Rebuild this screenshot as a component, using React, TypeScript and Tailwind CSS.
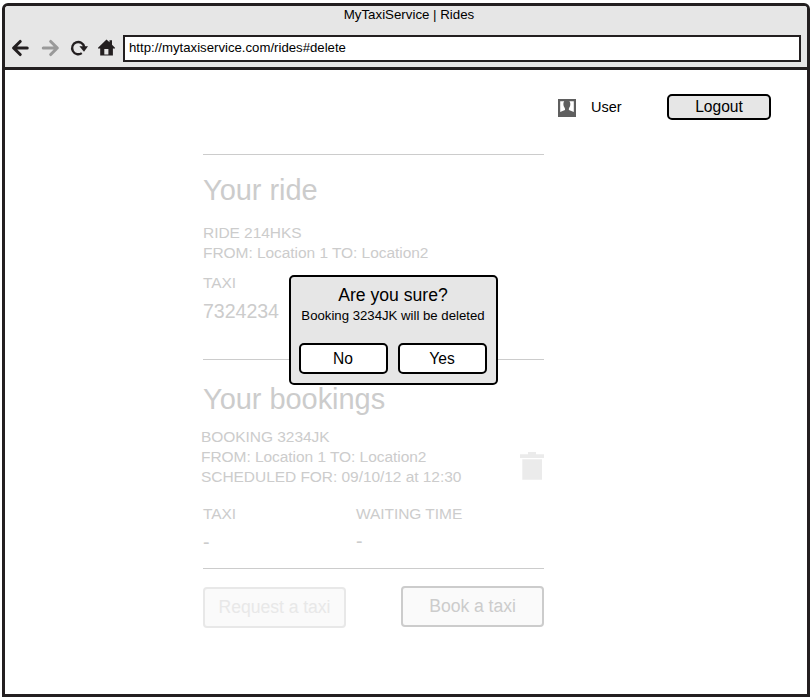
import React from "react";

function BrowserIcons() {
  return (
    <svg className="block h-[24px] w-[112px] shrink-0" viewBox="6 35.5 112 24" fill="none">
      <g stroke="#231f20" strokeWidth="3.1" strokeLinecap="round" strokeLinejoin="round">
        <path d="M14 48.5H27.2M20.2 42L13.6 48.5L20.2 55" />
        <path stroke="#999" d="M43.3 48.5H57M50.7 42L57.3 48.5L50.7 55" />
      </g>
      <path d="M81.8 53.6A6.1 6.1 0 1 1 84.2 47.4" stroke="#231f20" strokeWidth="2.3" />
      <path d="M79.4 46.7H88L84 52.2Z" fill="#231f20" />
      <path
        fillRule="evenodd"
        d="M106.5 40L109.5 42.8V40.8H112V45.2L115 48.2V49H112.9V56H100.2V49H98V48.2ZM104.3 49.6V55H108.4V49.6Z"
        fill="#231f20"
      />
    </svg>
  );
}

function UserIcon() {
  return (
    <svg className="block h-[18px] w-[18px]" viewBox="0 0 18 18">
      <path d="M0 0H18V18H0Z" fill="#5f5f5f" />
      <path
        d="M2.2 2.2H6.2C5 3.8 5.3 6 6 7.8C6.7 9 7.2 9.6 7 10.9L2.2 13ZM15.8 2.2H11.4C12.7 3.8 12.5 6 11.8 7.8C11.1 9 10.7 9.6 10.9 10.9L15.8 13Z"
        fill="#fff"
      />
    </svg>
  );
}

function TrashIcon() {
  return (
    <svg className="block h-[30px] w-[26px]" viewBox="0 0 26 30" fill="#ebebeb">
      <path d="M1 3.2H9V1H17V3.2H25V7H1ZM3.3 8.3H23V28.7H3.3Z" />
    </svg>
  );
}

function Dialog() {
  return (
    <div className="absolute left-[288.5px] top-[275.4px] flex h-[110px] w-[209px] flex-col rounded-[5px] border-[2.4px] border-black bg-[#e6e6e6] pt-[8px] text-center text-black">
      <h2 className="text-[17.6px] leading-5">Are you sure?</h2>
      <p className="whitespace-nowrap pt-px text-[13.2px] leading-5">Booking 3234JK will be deleted</p>
      <div className="mt-[17px] flex justify-between pl-[8px] pr-[9px]">
        <button className="h-[31px] w-[89px] rounded-[5px] border-2 border-black bg-white text-[15.6px] leading-[26px]">No</button>
        <button className="h-[31px] w-[89px] rounded-[5px] border-2 border-black bg-white text-[15.6px] leading-[26px]">Yes</button>
      </div>
    </div>
  );
}

export default function App() {
  return (
    <div className="relative h-[698px] w-[811px] overflow-hidden bg-white pl-[2px] pt-[3px] font-['Liberation_Sans',Arial,sans-serif] text-black">
      <div className="flex h-[694px] w-[808px] flex-col rounded-t-[6px] border-[3px] border-[#231f20]">
        <header className="h-[64px] shrink-0 rounded-t-[3px] border-b-[3px] border-[#231f20] bg-[#e6e6e6]">
          <div className="pl-[6px] text-center text-[13.3px] leading-[18px]">MyTaxiService | Rides</div>
          <div className="mt-[11px] flex">
            <div className="ml-[1px] mr-[5px]">
              <BrowserIcons />
            </div>
            <div className="h-[27px] w-[678px] border-[2.5px] border-[#231f20] bg-white pl-[4px] text-[13.2px] leading-[21px]">
              http://mytaxiservice.com/rides#delete
            </div>
          </div>
        </header>

        <nav className="flex h-[84px] shrink-0 justify-end pr-[36px] pt-[24px]">
          <div className="mt-[5px]">
            <UserIcon />
          </div>
          <span className="ml-[15px] mt-[3px] w-[76px] text-[14.5px] leading-5">User</span>
          <button className="h-[26px] w-[104px] rounded-[5px] border-2 border-black bg-[#e6e6e6] text-[15.6px] leading-[20px]">
            Logout
          </button>
        </nav>

        <main className="ml-[198px] w-[341px] whitespace-nowrap text-[15.5px] leading-5 tracking-[-0.05px] text-[#ccc]">
          <section className="h-[205px] border-t border-[#ccc] pt-[18px]">
            <h1 className="text-[29px] leading-[34px]">Your ride</h1>
            <p className="mt-[16px]">RIDE 214HKS</p>
            <p>FROM: Location 1 TO: Location2</p>
            <p className="mt-[10px]">TAXI</p>
            <p className="mt-[6px] text-[19.6px] leading-6">7324234</p>
          </section>

          <section className="h-[210px] border-y border-[#ccc] pt-[22px]">
            <h1 className="text-[29px] leading-[34px]">Your bookings</h1>
            <div className="-ml-[2px] mt-[11px] flex justify-between">
              <div>
                <p>BOOKING 3234JK</p>
                <p>FROM: Location 1 TO: Location2</p>
                <p>SCHEDULED FOR: 09/10/12 at 12:30</p>
              </div>
              <div className="-mr-px mt-[24px]">
                <TrashIcon />
              </div>
            </div>
            <div className="mt-[17px] flex">
              <div className="w-[153px]">
                <p>TAXI</p>
                <p className="mt-[6px] text-[19.6px] leading-6">-</p>
              </div>
              <div>
                <p>WAITING TIME</p>
                <p className="mt-[5px] text-[19.6px] leading-6">-</p>
              </div>
            </div>
          </section>

          <div className="mt-[17px] flex justify-between text-[17.6px]">
            <button className="mt-[1px] h-[41px] w-[143px] rounded-[4px] border-2 border-[#e8e8e8] bg-[#fafafa] pb-px leading-[34px] text-[#e8e8e8]">
              Request a taxi
            </button>
            <button className="h-[41px] w-[143px] rounded-[4px] border-2 border-[#ccc] bg-[#fafafa] pb-px leading-[34px]">
              Book a taxi
            </button>
          </div>
        </main>
      </div>
      <Dialog />
    </div>
  );
}
